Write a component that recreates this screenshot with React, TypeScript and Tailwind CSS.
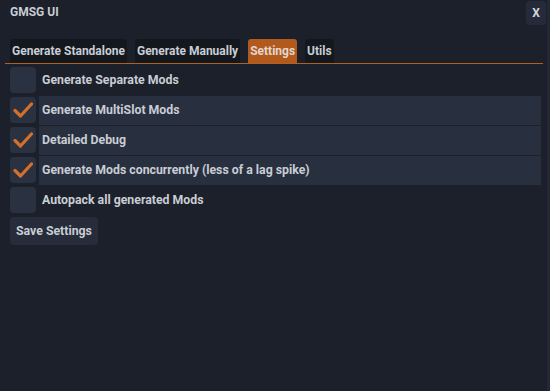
import React, { useState } from "react";

const TABS = ["Generate Standalone", "Generate Manually", "Settings", "Utils"];

const OPTIONS = [
  { id: 1, label: "Generate Separate Mods", checked: false },
  { id: 2, label: "Generate MultiSlot Mods", checked: true },
  { id: 3, label: "Detailed Debug", checked: true },
  { id: 4, label: "Generate Mods concurrently (less of a lag spike)", checked: true },
  { id: 5, label: "Autopack all generated Mods", checked: false },
];

const Check = () => (
  <svg width="20" height="16" viewBox="0 0 20 16" className="block">
    <path
      d="M2 8.5 L7.5 14 L18.5 2"
      fill="none"
      stroke="#d4702b"
      strokeWidth="3.2"
      strokeLinecap="round"
      strokeLinejoin="round"
    />
  </svg>
);

export default function App() {
  const [tab, setTab] = useState("Settings");
  const [opts, setOpts] = useState(OPTIONS);

  return (
    <div
      className="relative w-[550px] h-[391px] overflow-hidden bg-[#1b202a] text-[#c9cdd4] font-bold text-[12.3px]"
      style={{ fontFamily: "Roboto, 'Noto Sans', sans-serif" }}
    >
      {/* HEADER */}
      <div className="flex items-start justify-between pl-[10px] pr-[4px] pt-[1px]">
        <div className="pt-[4px] text-[12px] leading-[14px]">GMSG UI</div>
        <button className="w-[20px] h-[24px] rounded-[4px] bg-[#252b3a] text-[12px] text-[#d2d5db] flex items-center justify-center">
          X
        </button>
      </div>

      {/* TABS */}
      <div className="mt-[14px] ml-[5px] mr-[7px] pl-[5px] flex gap-2 border-b border-[#b0601f]">
        {TABS.map((t) => (
          <button
            key={t}
            onClick={() => setTab(t)}
            className={`h-[24px] px-[2px] rounded-t-[3px] leading-[24px] text-[12px] ${
              tab === t ? "bg-[#b25a1e] text-[#e3d6cc]" : "bg-[#13171e] text-[#c9cdd4]"
            }`}
          >
            {t}
          </button>
        ))}
      </div>

      {/* OPTIONS */}
      <div className="pl-[10px] pr-[9px] pt-[2px]">
        {opts.map((o) => (
          <div key={o.id} className="flex items-start h-[30px]">
            <button
              onClick={() =>
                setOpts(opts.map((x) => (x.id === o.id ? { ...x, checked: !x.checked } : x)))
              }
              className="mt-[1px] w-[26px] h-[26px] rounded-[4px] bg-[#2a3141] flex items-center justify-center"
            >
              {o.checked && <Check />}
            </button>
            <div
              className={`ml-[3px] flex-1 h-[29px] flex items-center pl-[3px] ${
                o.checked ? "bg-[#283040]" : ""
              }`}
            >
              {o.label}
            </div>
          </div>
        ))}
        <button className="mt-[1px] h-[28px] px-[6px] rounded-[4px] bg-[#262c3a] text-[#c9cdd4]">
          Save Settings
        </button>
      </div>

      <div className="absolute right-0 top-0 w-[3px] h-full bg-[#222836]" />
    </div>
  );
}
